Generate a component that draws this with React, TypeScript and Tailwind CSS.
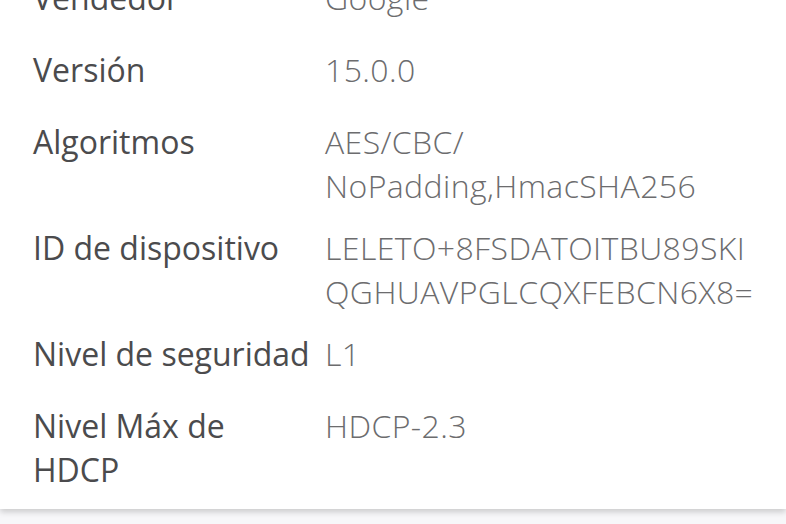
const rows: { label: string; value: string[] }[] = [
  { label: "Vendedor", value: ["Google"] },
  { label: "Versión", value: ["15.0.0"] },
  { label: "Algoritmos", value: ["AES/CBC/", "NoPadding,HmacSHA256"] },
  { label: "ID de dispositivo", value: ["LELETO+8FSDATOITBU89SKI", "QGHUAVPGLCQXFEBCN6X8="] },
  { label: "Nivel de seguridad", value: ["L1"] },
  { label: "Nivel Máx de HDCP", value: ["HDCP-2.3"] },
];

export default function App() {
  return (
    <div
      className="h-[524px] w-[786px] overflow-hidden bg-[#f7f7f9]"
      style={{ fontFamily: '"Open Sans", "Noto Sans", sans-serif' }}
    >
      <div className="-mt-[33px] bg-white pb-[8px] shadow-[0_3px_6px_rgba(0,0,0,0.18)]">
        {rows.map((r) => (
          <div key={r.label} className="flex min-h-[72px] items-start px-[33px] py-[9px]">
            <div className="w-[292px] shrink-0 pr-[14px] text-[32px] font-medium leading-[44px] text-[#4b4b4d]">
              {r.label === "Nivel Máx de HDCP" ? (
                <>
                  Nivel Máx de
                  <br />
                  HDCP
                </>
              ) : (
                <span className="whitespace-nowrap">{r.label}</span>
              )}
            </div>
            <div className="flex flex-col text-[32px] font-light tracking-[0.4px] leading-[44px] text-[#6c6c6e]">
              {r.value.map((v) => (
                <span key={v}>{v}</span>
              ))}
            </div>
          </div>
        ))}
      </div>
    </div>
  );
}
